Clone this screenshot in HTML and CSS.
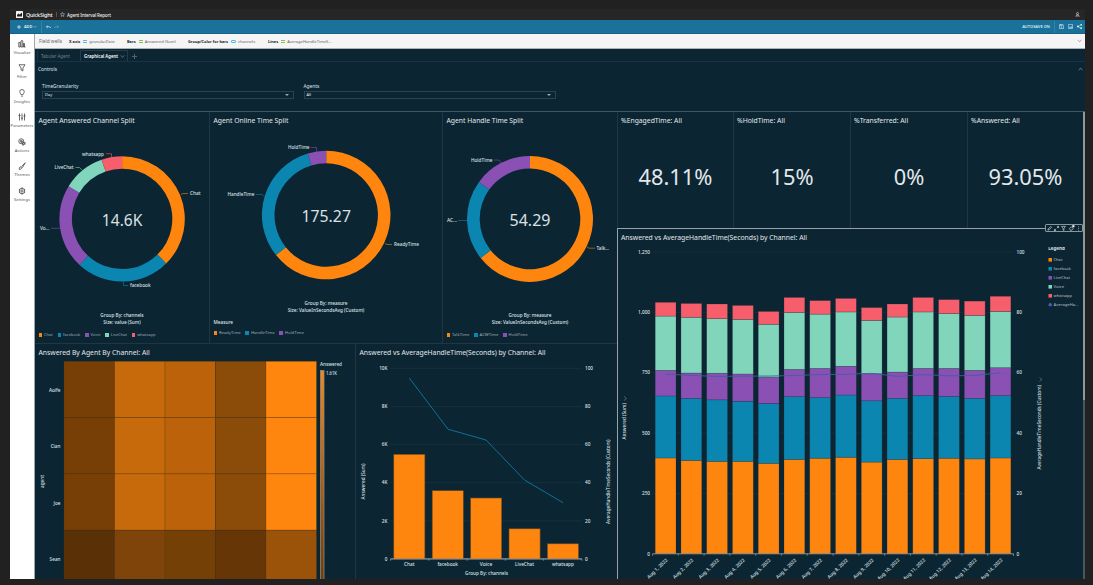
FILE: index.html
```html
<!DOCTYPE html>
<html lang="en">
<head>
<meta charset="utf-8">
<title>Agent Interval Report</title>
<link rel="stylesheet" href="styles.css">
</head>
<body>
<div class="app">
  <header class="topbar">
    <svg class="logo" viewBox="0 0 14 14"><rect width="14" height="14" rx="1" fill="#f4f4f4"/><path d="M2 11V8l3-3 2.500 2L12 3v8z" fill="#222"/></svg>
    <span class="brand">QuickSight</span>
    <span class="bar-sep"></span>
    <svg class="star" viewBox="0 0 12 12"><path d="M6 1l1.500 3.300 3.500.4-2.600 2.400.7 3.600L6 8.900l-3.100 1.800.7-3.600L1 4.700l3.500-.4z" fill="none" stroke="#ddd" stroke-width="1.200"/></svg>
    <span class="report">Agent Interval Report</span>
    <svg class="user" viewBox="0 0 10 10"><circle cx="5" cy="3" r="2" fill="none" stroke="#ccc" stroke-width="1.400"/><path d="M1.500 9.500L3.500 5.500h3L8.500 9.500M3 8h4" fill="none" stroke="#ccc" stroke-width="1.400"/></svg>
  </header>

  <div class="toolbar">
    <svg class="plus" viewBox="0 0 10 10"><path d="M5 0v10M0 5h10" stroke="#d5e7ef" stroke-width="2"/></svg>
    <span class="add">ADD</span>
    <svg class="caret" viewBox="0 0 8 6"><path d="M1 1l3 3 3-3" fill="none" stroke="#8dbdd3" stroke-width="1.400"/></svg>
    <span class="tool-sep"></span>
    <svg class="undo" viewBox="0 0 12 8"><path d="M4 1L1 3.500 4 6M1 3.500h7q3 0 3 3" fill="none" stroke="#d5e7ef" stroke-width="1.800"/></svg>
    <svg class="undo dim" viewBox="0 0 12 8"><path d="M8 1l3 2.500L8 6M11 3.500H4q-3 0-3 3" fill="none" stroke="#d5e7ef" stroke-width="1.800"/></svg>
    <span class="autosave">AUTOSAVE ON</span>
    <span class="tool-sep"></span>
    <svg class="tool" viewBox="0 0 12 12"><path d="M1 1h8l2 2v8H1zM3.500 1v3h4V1" fill="none" stroke="#d5e7ef" stroke-width="1.500"/><circle cx="6" cy="7.500" r="1.500" fill="none" stroke="#d5e7ef"/></svg>
    <svg class="tool" viewBox="0 0 12 12"><path d="M1 1h10v10H1zM3 9l2-2 1 1 2-2 2 3z" fill="none" stroke="#d5e7ef" stroke-width="1.400"/></svg>
    <svg class="tool" viewBox="0 0 12 12"><path d="M10 2L2 6l8 4" fill="none" stroke="#d5e7ef" stroke-width="1.300"/><g fill="#e8f2f7"><circle cx="10" cy="2" r="2"/><circle cx="2.200" cy="6" r="2.200"/><circle cx="10" cy="10" r="2"/></g></svg>
  </div>

  <div class="body">
    <nav class="side">
      <a class="side-item"><svg viewBox="0 0 16 16"><path d="M1.500 5h3v9h-3zM6 1.500h3.500V14H6zM11 7h2v7h-2zM13 14h2" /></svg>Visualize</a>
      <a class="side-item"><svg viewBox="0 0 16 16"><path d="M2 1.500h12L9.800 8v6L6.200 12V8z"/></svg>Filter</a>
      <a class="side-item"><svg viewBox="0 0 16 16"><path d="M6 11.500C6 9 3.500 8.500 3.500 5.500a4.500 4.500 0 0 1 9 0c0 3-2.500 3.500-2.500 6zM6.500 14.500h3"/></svg>Insights</a>
      <a class="side-item"><svg viewBox="0 0 16 16"><path d="M3 1v14M8 1v14M13 1v14M1 5h4M6 10.500h4M11 6h4"/></svg>Parameters</a>
      <a class="side-item"><svg viewBox="0 0 16 16"><circle cx="6.500" cy="6.500" r="5"/><circle cx="6.500" cy="6.500" r="2"/><path d="M7 7l8 3-3.200 1.300L14.500 14M7 7l3 8 1.500-3.500"/></svg>Actions</a>
      <a class="side-item"><svg viewBox="0 0 16 16"><path d="M14.500 1.500L7 9M9 11l5.500-9.500M2 14.500c1-1 .5-3 2-4.500 2-1.500 4.500.5 3.500 2.500S4 15 2 14.500z"/></svg>Themes</a>
      <a class="side-item"><svg viewBox="0 0 16 16"><circle cx="8" cy="8" r="5.500"/><circle cx="8" cy="8" r="2.300"/><path d="M8 .8v2M8 13.200v2M1.800 4.400l1.700 1M12.500 10.600l1.700 1M1.800 11.600l1.700-1M12.500 5.400l1.700-1"/></svg>Settings</a>
    </nav>

    <main class="main">
      <div class="wells">
        <span class="wells-title">Field wells</span>
        <span class="well w1"><b>X axis</b><i class="blue"></i>granularDate</span>
        <span class="well w2"><b>Bars</b><i></i>Answered (Sum)</span>
        <span class="well w3"><b>Group/Color for bars</b><i class="pill"></i>channels</span>
        <span class="well w4"><b>Lines</b><i></i>AverageHandleTimeS...</span>
        <svg class="chev" viewBox="0 0 8 5"><path d="M1 1l3 2.500L7 1" fill="none" stroke="#777"/></svg>
      </div>
      <div class="tabs">
        <span class="tab">Tabular Agent</span>
        <span class="tab active">Graphical Agent<svg viewBox="0 0 8 5"><path d="M1 .5l3 3.500L7 .5" fill="none" stroke="#87969e"/></svg></span>
        <span class="tab-add"></span>
      </div>
      <section class="controls">
        <div class="controls-head">Controls<svg class="chev" viewBox="0 0 8 5"><path d="M1 4l3-2.500L7 4" fill="none" stroke="#b0bcc2"/></svg></div>
        <div class="fields">
          <label class="field">TimeGranularity<span class="select">Day<i></i></span></label>
          <label class="field">Agents<span class="select">All<i></i></span></label>
        </div>
      </section>

      <div class="board">
        <div class="left">
          <div class="row top">
            <section class="panel">
              <h2>Agent Answered Channel Split</h2>
              <svg id="donut-channel" width="174" height="183" viewBox="35 129 174 183"></svg>
              <p class="caption">Group By: channels<br>Size: value (Sum)</p>
              <div class="legend l1"><span class="c1">Chat</span><span class="c2">facebook</span><span class="c3">Voice</span><span class="c4">LiveChat</span><span class="c5">whatsapp</span></div>
            </section>
            <section class="panel">
              <h2>Agent Online Time Split</h2>
              <svg id="donut-online" width="232" height="171" viewBox="210 129 232 171"></svg>
              <p class="caption">Group By: measure<br>Size: ValueInSecondsAvg (Custom)</p>
              <div class="legend-title">Measure</div>
              <div class="legend l2"><span class="c1">ReadyTime</span><span class="c2">HandleTime</span><span class="c3">HoldTime</span></div>
            </section>
            <section class="panel">
              <h2>Agent Handle Time Split</h2>
              <svg id="donut-handle" width="174" height="183" viewBox="443 129 174 183"></svg>
              <p class="caption">Group By: measure<br>Size: ValueInSecondsAvg (Custom)</p>
              <div class="legend l3"><span class="c1">TalkTime</span><span class="c2">ACWTime</span><span class="c3">HoldTime</span></div>
            </section>
          </div>
          <div class="row bottom">
            <section class="panel">
              <h2>Answered By Agent By Channel: All</h2>
              <svg id="heatmap" width="320" height="218" viewBox="35 361 320 218"></svg>
            </section>
            <section class="panel">
              <h2>Answered vs AverageHandleTime(Seconds) by Channel: All</h2>
              <svg id="combo" width="261" height="218" viewBox="356 361 261 218"></svg>
            </section>
          </div>
        </div>
        <div class="right">
          <div class="kpis">
            <section class="panel kpi"><h2>%EngagedTime: All</h2><strong>48.11%</strong></section>
            <section class="panel kpi"><h2>%HoldTime: All</h2><strong>15%</strong></section>
            <section class="panel kpi"><h2>%Transferred: All</h2><strong>0%</strong></section>
            <section class="panel kpi"><h2>%Answered: All</h2><strong>93.05%</strong></section>
          </div>
          <section class="panel selected">
            <h2>Answered vs AverageHandleTime(Seconds) by Channel: All</h2>
            <svg id="stacked" width="465" height="332" viewBox="618 247 465 332"></svg>
            <div class="menu">
              <svg viewBox="0 0 12 12"><path d="M2 10l1-3 6-6 2 2-6 6z"/></svg>
              <svg viewBox="0 0 12 12"><path d="M7 1h4v4M11 1L7 5M5 11H1V7M1 11l4-4"/></svg>
              <svg viewBox="0 0 12 12"><path d="M1.500 1h9L7 6v5L5 9.500V6z"/></svg>
              <svg viewBox="0 0 12 12"><path d="M1 6l5-4 4 4-2 3-4 2z"/><rect x="8" y="-2" width="5" height="5" fill="#fff" stroke="none"/></svg>
              <svg viewBox="0 0 12 12"><path d="M6 1v2M6 5v2M6 9v2"/></svg>
            </div>
          </section>
        </div>
        <div class="scroll"><span></span></div>
      </div>
    </main>
  </div>
</div>
<script src="charts.js"></script>
</body>
</html>
```
FILE: styles.css
```css
* { box-sizing: border-box; }
body {
  margin: 0;
  width: 1093px;
  height: 585px;
  overflow: hidden;
  padding: 9px 8px 6px 10px;
  background: #212121;
  font-family: "Noto Sans", "Open Sans", sans-serif;
  font-size: 5px;
  color: #dfe5e8;
}
svg { display: block; flex: none; }
.app { display: flex; flex-direction: column; width: 1075px; height: 570px; overflow: hidden; background: #0b2533; }

.topbar { display: flex; align-items: center; height: 11px; padding: 0 5px 0 6px; background: #262626; color: #eee; white-space: nowrap; }
.logo { width: 7px; height: 7px; }
.brand { width: 30px; margin-left: 3px; font-size: 5.400px; letter-spacing: -0.15px; font-weight: 500; color: #fff; }
.bar-sep { width: 1px; height: 5px; background: #555; }
.star { width: 5px; height: 5px; margin: 0 2px 0 3px; }
.report { font-size: 4.500px; letter-spacing: -0.13px; font-weight: 500; }
.user { width: 5px; height: 5px; margin-left: auto; }

.toolbar { display: flex; align-items: center; height: 14px; padding: 0 3px 0 7px; background: #1a729b; border-bottom: 1px solid #14648a; }
.plus { width: 4px; height: 4px; }
.add { margin: -1px 1px 0 3px; font-size: 3.900px; font-weight: 600; color: #e5f0f5; }
.caret { width: 4px; height: 4px; }
.tool-sep { width: 1px; height: 12px; margin: 0 4px; background: #3585aa; }
.undo { width: 5px; height: 4px; margin-right: 3px; }
.dim { opacity: .4; }
.autosave { margin-left: auto; font-size: 4px; font-weight: 600; color: #d5e7ef; }
.tool { width: 5px; height: 5px; margin-right: 4px; }
.tool:last-child { margin-right: 0; }

.body { display: flex; flex: 1; min-height: 0; }
.side { display: flex; flex-direction: column; width: 25px; background: #fff; border-right: 1px solid #9aa7ad; padding-top: 5.500px; }
.side-item { display: flex; flex-direction: column; align-items: center; height: 24.500px; color: #555; font-size: 4.200px; line-height: 6px; white-space: nowrap; }
.side-item svg { width: 8px; height: 8px; margin-bottom: 2px; fill: none; stroke: #444; stroke-width: 1.600; }
.main { display: flex; flex-direction: column; flex: 1; min-width: 0; }

.wells { display: flex; align-items: center; height: 15px; padding: 0 3px 0 4px; background: #f5f5f5; border-bottom: 1px solid #a9b3b8; color: #666; font-size: 4.100px; white-space: nowrap; }
.wells-title { width: 30px; font-size: 4.800px; }
.well { display: flex; align-items: center; }
.well b { color: #222; font-size: 3.900px; }
.well i { width: 4px; height: 3px; margin: 0 2px 0 3px; border: solid #7dc54c; border-width: 1px 0; }
.well .blue { border-color: #5cb9e6; }
.well .pill { width: 5px; border: 1px solid #5cb9e6; border-radius: 1px; }
.w1 { width: 58px; }
.w2 { width: 61px; }
.w3 { width: 80px; }
.chev { width: 5px; height: 4px; margin-left: auto; }

.tabs { display: flex; height: 13px; border-bottom: 1px solid #19323f; padding-left: 2px; white-space: nowrap; }
.tab { display: flex; align-items: center; width: 43px; padding: 2px 0 0 3px; border-left: 1px solid #19323f; color: #73828a; font-size: 4.400px; }
.active { width: 48px; margin-top: 1px; padding-top: 0; border: 1px solid #233c49; border-bottom: 0; color: #fff; font-weight: 600; font-size: 4.350px; }
.active svg { width: 5px; height: 3px; margin-left: 2px; }
.tab-add { width: 5px; height: 5px; margin: 5px 0 0 4px; background: linear-gradient(#50626c, #50626c) 50% / 100% 1px no-repeat, linear-gradient(#50626c, #50626c) 50% / 1px 100% no-repeat; }

.controls { height: 49px; padding: 0 2px 0 3px; font-size: 4.800px; }
.controls-head { display: flex; align-items: center; height: 14px; }
.fields { display: flex; gap: 9.500px; padding: 7px 0 0 4px; }
.field { width: 252px; line-height: 6px; }
.select { display: flex; align-items: center; width: 252px; height: 8px; margin-top: 2px; padding: 0 4px 0 2px; border: 1px solid #2a4350; font-size: 4px; color: #eee; }
.select i { margin-left: auto; border: solid transparent; border-width: 2px 2px 0; border-top-color: #9aa8af; }

.board { display: flex; height: 468px; border-top: 1px solid #435864; }
.left { width: 582px; display: flex; flex-direction: column; }
.row { display: grid; }
.top { grid-template-columns: 175px 233px 174px; height: 232px; }
.bottom { grid-template-columns: 321px 261px; height: 236px; }
.panel { min-width: 0; border-right: 1px solid #1e3743; border-bottom: 1px solid #1e3743; overflow: hidden; }
.panel h2 { height: 17px; margin: 0; padding: 2px 0 0 3.500px; font-size: 6.800px; line-height: 14px; font-weight: 400; color: #e3e8ea; white-space: nowrap; }
.bottom .panel { border-bottom: 0; }
.bottom .panel + .panel, .top .panel:last-child { border-right: 0; }
.caption { margin: 0; font-size: 4.700px; font-weight: 500; line-height: 7.300px; text-align: center; }
.legend { display: flex; gap: 4.700px; padding: 5.500px 0 0 3.500px; font-size: 4.200px; line-height: 6px; color: #a0adb3; }
.l1 { gap: 4.800px; font-size: 4px; }
.legend span { display: flex; align-items: center; gap: 2px; }
.legend span::before { content: ""; width: 3.500px; height: 3.500px; background: var(--c); }
.legend-title { padding: 4px 0 0 3.500px; line-height: 6px; font-size: 4.700px; font-weight: 500; }
.c1 { --c: #fe860f; }
.c2 { --c: #0a86b0; }
.c3 { --c: #8a50b4; }
.c4 { --c: #80d5ba; }
.c5 { --c: #f65e6b; }

.right { width: 466px; display: flex; flex-direction: column; }
.kpis { display: grid; grid-template-columns: 116px 117px 117px 116px; height: 116px; }
.kpi { border-bottom: 0; border-right: 0; border-left: 1px solid #1e3743; }
.kpi h2 { padding-left: 3px; }
.kpi strong { display: block; margin-top: 32.500px; font-size: 21.800px; line-height: 30px; font-weight: 400; text-align: center; color: #e3e8ea; }
.selected { position: relative; flex: 1; border: 1px solid #97a3a9; border-width: 1px 0 0 1px; overflow: visible; }
.selected h2 { height: 18px; padding: 1.500px 0 0 3px; }
.menu { position: absolute; right: 0; top: -5px; display: flex; align-items: center; justify-content: space-around; width: 38px; height: 8px; background: #0b2533; border: 1px solid #87959c; border-radius: 1px; }
.menu svg { width: 5px; height: 5px; overflow: visible; fill: none; stroke: #d5dcdf; stroke-width: 1.600; }
.scroll { width: 2px; background: #47575f; }
.scroll span { display: block; height: 288px; background: #8d999f; }

text { font-family: "Noto Sans", "Open Sans", sans-serif; font-weight: 500; fill: #dbe1e4; }
text.total { font-weight: 400; }
text.legend-head { font-weight: 700; }
```
FILE: charts.js
```js
const COLORS = ['#fe860f', '#0a86b0', '#8a50b4', '#80d5ba', '#f65e6b'];
const NS = 'http://www.w3.org/2000/svg';

function el(parent, name, attrs, text) {
  const node = document.createElementNS(NS, name);
  for (const key in attrs) node.setAttribute(key, attrs[key]);
  if (text !== undefined) node.textContent = text;
  parent.appendChild(node);
  return node;
}

function label(svg, x, y, text, opts = {}) {
  const attrs = { x, y, 'font-size': opts.size || 4.7, 'text-anchor': opts.anchor || 'start' };
  if (opts.width) { attrs.textLength = opts.width; attrs.lengthAdjust = 'spacingAndGlyphs'; }
  if (opts.rotate) attrs.transform = `rotate(${opts.rotate} ${x} ${y})`;
  if (opts.cls) attrs.class = opts.cls;
  if (opts.fill) attrs.style = `fill:${opts.fill}`;
  return el(svg, 'text', attrs, text);
}

function donut(id, cx, cy, R, r, slices, total, totalWidth, callouts) {
  const svg = document.getElementById(id);
  const pt = (radius, deg) => {
    const a = deg * Math.PI / 180;
    return `${(cx + radius * Math.sin(a)).toFixed(2)} ${(cy - radius * Math.cos(a)).toFixed(2)}`;
  };
  let start = 0;
  slices.forEach(([end, color]) => {
    const large = end - start > 180 ? 1 : 0;
    el(svg, 'path', {
      d: `M${pt(R, start)}A${R} ${R} 0 ${large} 1 ${pt(R, end)}L${pt(r, end)}A${r} ${r} 0 ${large} 0 ${pt(r, start)}Z`,
      fill: COLORS[color]
    });
    start = end;
  });
  label(svg, cx, cy + 6.6, total, { size: 16.3, anchor: 'middle', width: totalWidth, cls: 'total' });
  callouts.forEach(([text, x, y, width, path, color]) => {
    label(svg, x, y, text, { width });
    el(svg, 'path', { d: path, fill: 'none', stroke: COLORS[color], 'stroke-width': 0.7, opacity: 0.8 });
  });
}

donut('donut-channel', 122.1, 218.9, 62.7, 50.2,
  [[135.3, 0], [222.7, 1], [301.5, 2], [340.9, 3], [360, 4]], '14.6K', 40.5, [
    ['Chat', 190, 195.2, 10.500, 'M181 194.500l2-1h5', 0],
    ['facebook', 130, 287, 20.500, 'M123.500 281.500v4h4.500', 1],
    ['Vo...', 40, 229.500, 9.500, 'M51 228.300h9', 2],
    ['LiveChat', 54.500, 169, 19, 'M75.500 167.500h4l2.500 2.500', 3],
    ['whatsapp', 82, 155.500, 22, 'M106 153.700h5.500v3.500', 4]
  ]);
donut('donut-online', 326.2, 215, 64.3, 51.7,
  [[231.4, 0], [343.3, 1], [360, 2]], '175.27', 49.5, [
    ['ReadyTime', 394, 246, 25, 'M385 243.500l2 1h5', 0],
    ['HandleTime', 227.500, 196, 27, 'M256 194.500h6l2.500 2', 1],
    ['HoldTime', 288, 149, 21.500, 'M311 147.500h5.500v4', 2]
  ]);
donut('donut-handle', 530, 218.9, 63, 50.3,
  [[231.6, 0], [305.7, 1], [360, 2]], '54.29', 40.8, [
    ['Talk...', 596.500, 249.700, 12.500, 'M587 247l2 1.200h6', 0],
    ['AC...', 447, 222, 10, 'M458 220.500h9', 1],
    ['HoldTime', 471, 161.700, 21.500, 'M494 160h5l2.500 3', 2]
  ]);

function heatmap() {
  const svg = document.getElementById('heatmap');
  const busy = ['#773f06', '#c66a0b', '#bb620a', '#8b4b09', '#fe860f'];
  const quiet = ['#5a3006', '#7e440a', '#754006', '#663607', '#9b530a'];
  ['Aoife', 'Cian', 'Joe', 'Sean'].forEach((agent, r) => {
    const y = 361.3 + r * 56.3;
    (r < 3 ? busy : quiet).forEach((fill, c) => {
      el(svg, 'rect', { x: 64 + c * 50.5, y, width: 50.5, height: 56.3, fill, stroke: '#4d3213', 'stroke-opacity': 0.3, 'stroke-width': 0.8 });
    });
    label(svg, 60.5, 392 + r * 56.3, agent, { anchor: 'end' });
  });
  label(svg, 44, 488, 'agent', { rotate: -90, width: 13 });
  label(svg, 320, 366, 'Answered', { width: 22 });
  label(svg, 326, 375, '1.61K', { width: 11 });
  const grad = el(el(svg, 'defs', {}), 'linearGradient', { id: 'heat', x1: 0, y1: 0, x2: 0, y2: 1 });
  el(grad, 'stop', { offset: 0, 'stop-color': '#fe860f' });
  el(grad, 'stop', { offset: 1, 'stop-color': '#6d3a07' });
  el(svg, 'rect', { x: 320.5, y: 370.5, width: 3.5, height: 215, fill: 'url(#heat)', stroke: '#7f8c91', 'stroke-width': 0.8 });
}

function combo() {
  const svg = document.getElementById('combo');
  for (let i = 0; i <= 5; i++) {
    const y = 559 - i * 38.14;
    el(svg, 'path', { d: `M390.500 ${y}H582`, stroke: i ? '#19323f' : '#9ba6ac', 'stroke-width': 0.8 });
    label(svg, 387.5, y + 1.7, i ? `${i * 2}K` : '0', { anchor: 'end' });
    label(svg, 585, y + 1.7, i * 20);
  }
  [['Chat', 454.3, 10.5], ['facebook', 490.7, 20.5], ['Voice', 498, 12.5], ['LiveChat', 528.8, 19], ['whatsapp', 543.8, 22]].forEach(([name, top, width], i) => {
    const x = 393.8 + i * 38.4;
    el(svg, 'rect', { x, y: top, width: 31.1, height: 559 - top, fill: COLORS[0], stroke: '#6b481f', 'stroke-width': 0.6 });
    label(svg, x + 15.5, 565.7, name, { anchor: 'middle', width });
  });
  el(svg, 'path', { d: 'M390.500 558.800H582M390.500 559v1.800M428.800 559v1.800M467 559v1.800M505.300 559v1.800M543.600 559v1.800M582 559v1.800', stroke: '#9ba6ac', 'stroke-width': 0.6 });
  el(svg, 'path', { d: 'M409.300 378L448 429.200L486 440L524.500 480L563 502.700', fill: 'none', stroke: '#0b7ba3', 'stroke-width': 0.9 });
  label(svg, 486.500, 574.600, 'Group By: channels', { anchor: 'middle', width: 43 });
  label(svg, 364.500, 499.500, 'Answered (Sum)', { rotate: -90, width: 36 });
  label(svg, 609.800, 524, 'AverageHandleTimeSeconds (Custom)', { rotate: -90, width: 84.500 });
}

// Each row holds the cumulative tops of Chat, facebook, LiveChat, Voice, whatsapp.
const DAYS = [
  [397, 654, 760, 985, 1042], [387, 644, 749, 980, 1037], [383, 638, 748, 974, 1035], [383, 632, 745, 971, 1029],
  [375, 623, 731, 951, 1004], [391, 651, 764, 1000, 1062], [396, 647, 768, 993, 1049], [400, 658, 777, 1002, 1058],
  [380, 634, 746, 967, 1020], [391, 644, 753, 981, 1035], [394, 655, 768, 1002, 1062], [396, 652, 768, 995, 1053],
  [393, 644, 760, 988, 1047], [397, 655, 771, 1004, 1067]
];
const HANDLE = [59.6, 59.1, 58.8, 58.9, 58.9, 59.1, 59.4, 59.5, 59.8, 58.8, 59.4, 59, 59.1, 60];

function stacked() {
  const svg = document.getElementById('stacked');
  const base = 553.8, height = 301.7;
  for (let i = 0; i <= 5; i++) {
    const y = base - i * height / 5;
    el(svg, 'path', { d: `M652.500 ${y}H1013.500`, stroke: '#19323f', 'stroke-width': 0.7 });
    label(svg, 650, y + 1.7, (i * 250).toLocaleString('en-US'), { anchor: 'end' });
    label(svg, 1016.5, y + 1.7, i * 20);
  }
  const points = [];
  DAYS.forEach((tops, d) => {
    const x = 655.2 + d * 25.76;
    let prev = 0;
    tops.forEach((top, i) => {
      el(svg, 'rect', { x, y: base - top / 1250 * height, width: 20.8, height: (top - prev) / 1250 * height, fill: COLORS[i], stroke: '#263442', 'stroke-opacity': 0.4, 'stroke-width': 0.6 });
      prev = top;
    });
    points.push(`${x + 10.4},${base - HANDLE[d] / 100 * height}`);
    el(svg, 'path', { d: `M${652.5 + d * 25.79} ${base}v2`, stroke: '#9ba6ac', 'stroke-width': 0.6 });
    label(svg, x + 12.8, 560.500, `Aug ${d + 1}, 2022`, { anchor: 'end', rotate: -44, width: d > 8 ? 28.500 : 26.500 });
  });
  el(svg, 'path', { d: `M652.500 ${base}H1013.500v2`, fill: 'none', stroke: '#9ba6ac', 'stroke-width': 0.8 });
  el(svg, 'polyline', { points: points.join(' '), fill: 'none', stroke: '#425f9f', 'stroke-width': 0.9 });

  label(svg, 626.300, 439.500, 'Answered (Sum)', { rotate: -90, width: 36.500 });
  label(svg, 1041.300, 469.500, 'AverageHandleTimeSeconds (Custom)', { rotate: -90, width: 84.500 });
  el(svg, 'path', { d: 'M624 396.500l2.500 2-2.500 2M1039.500 377.500l2.500 2-2.500 2', fill: 'none', stroke: '#7b8a92', 'stroke-width': 0.6 });

  label(svg, 1048.300, 249.600, 'Legend', { width: 16.500, cls: 'legend-head' });
  [['Chat', 9], ['facebook', 17.5], ['LiveChat', 16.5], ['Voice', 10.5], ['whatsapp', 18.5], ['AverageHa...', 25]].forEach(([name, width], i) => {
    const y = 259.8 + i * 9;
    if (i < 5) el(svg, 'rect', { x: 1048.5, y: y - 1.8, width: 3.5, height: 3.6, fill: COLORS[i] });
    else el(svg, 'circle', { cx: 1050.2, cy: y, r: 1.8, fill: '#3f62ad' });
    label(svg, 1053.500, y + 1.500, name, { size: 4.2, width, fill: '#a0adb3' });
  });
}

heatmap();
combo();
stacked();
```
